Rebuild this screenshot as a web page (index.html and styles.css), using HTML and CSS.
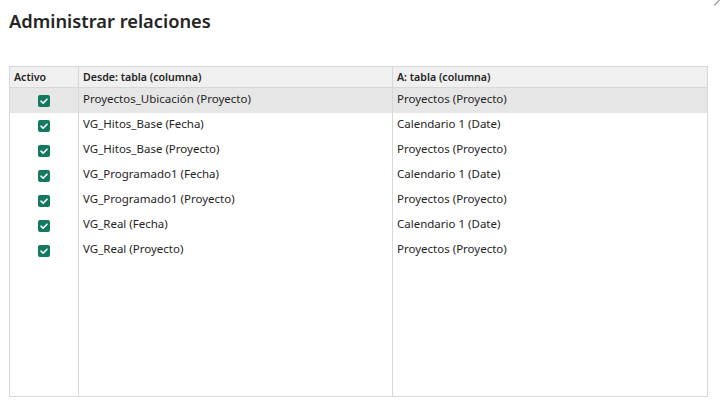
FILE: index.html
```html
<!DOCTYPE html>
<html lang="es">
<head>
<meta charset="utf-8">
<title>Administrar relaciones</title>
<link rel="stylesheet" href="styles.css">
</head>
<body>
<div class="dialog">
  <span class="close-hint"></span>
  <h1 class="title">Administrar relaciones</h1>
  <table class="rel-table">
    <colgroup>
      <col class="c-active">
      <col class="c-from">
      <col class="c-to">
    </colgroup>
    <thead>
      <tr>
        <th>Activo</th>
        <th>Desde: tabla (columna)</th>
        <th>A: tabla (columna)</th>
      </tr>
    </thead>
    <tbody>
      <tr class="selected">
        <td class="chk"><span class="box"><svg viewBox="0 0 12 12"><path d="M3 6.2 L5.1 8.2 L9 4.2"/></svg></span></td>
        <td>Proyectos_Ubicación (Proyecto)</td>
        <td>Proyectos (Proyecto)</td>
      </tr>
      <tr>
        <td class="chk"><span class="box"><svg viewBox="0 0 12 12"><path d="M3 6.2 L5.1 8.2 L9 4.2"/></svg></span></td>
        <td>VG_Hitos_Base (Fecha)</td>
        <td>Calendario 1 (Date)</td>
      </tr>
      <tr>
        <td class="chk"><span class="box"><svg viewBox="0 0 12 12"><path d="M3 6.2 L5.1 8.2 L9 4.2"/></svg></span></td>
        <td>VG_Hitos_Base (Proyecto)</td>
        <td>Proyectos (Proyecto)</td>
      </tr>
      <tr>
        <td class="chk"><span class="box"><svg viewBox="0 0 12 12"><path d="M3 6.2 L5.1 8.2 L9 4.2"/></svg></span></td>
        <td>VG_Programado1 (Fecha)</td>
        <td>Calendario 1 (Date)</td>
      </tr>
      <tr>
        <td class="chk"><span class="box"><svg viewBox="0 0 12 12"><path d="M3 6.2 L5.1 8.2 L9 4.2"/></svg></span></td>
        <td>VG_Programado1 (Proyecto)</td>
        <td>Proyectos (Proyecto)</td>
      </tr>
      <tr>
        <td class="chk"><span class="box"><svg viewBox="0 0 12 12"><path d="M3 6.2 L5.1 8.2 L9 4.2"/></svg></span></td>
        <td>VG_Real (Fecha)</td>
        <td>Calendario 1 (Date)</td>
      </tr>
      <tr>
        <td class="chk"><span class="box"><svg viewBox="0 0 12 12"><path d="M3 6.2 L5.1 8.2 L9 4.2"/></svg></span></td>
        <td>VG_Real (Proyecto)</td>
        <td>Proyectos (Proyecto)</td>
      </tr>
      <tr class="filler">
        <td></td><td></td><td></td>
      </tr>
    </tbody>
  </table>
</div>
</body>
</html>
```
FILE: styles.css
```css
html, body {
  margin: 0;
  padding: 0;
  background: #ffffff;
}

body {
  font-family: "Noto Sans", "Open Sans", sans-serif;
  color: #252423;
}

.dialog {
  position: relative;
  width: 722px;
  height: 416px;
  padding: 6px 0 0 9px;
  box-sizing: border-box;
}

.close-hint {
  position: absolute;
  right: 1px;
  top: 2px;
  width: 8px;
  height: 1px;
  background: #808080;
  transform: rotate(-45deg);
}

.title {
  margin: 0 0 30px 0;
  font-size: 18.3px;
  font-weight: 600;
  line-height: 30px;
  color: #252423;
}

.rel-table {
  border-collapse: collapse;
  width: 698px;
  height: 331px;
  table-layout: fixed;
  border: 1px solid #d8d8d8;
  font-size: 11.5px;
}

.c-active { width: 69px; }
.c-from { width: 314px; }
.c-to { width: 315px; }

.rel-table th,
.rel-table td {
  border-left: 1px solid #d8d8d8;
  border-right: 1px solid #d8d8d8;
  padding: 0 4px;
  text-align: left;
  white-space: nowrap;
  overflow: hidden;
}

.rel-table thead tr {
  height: 20px;
}

.rel-table thead th {
  height: 19px;
  padding: 0 4px 1px;
  line-height: 14px;
  background: #f0f0f0;
  font-weight: 600;
  font-size: 10.6px;
  border-bottom: 1px solid #d8d8d8;
  vertical-align: middle;
}

.rel-table tbody tr {
  height: 25px;
}

.rel-table tbody td {
  vertical-align: top;
  padding-top: 3px;
  line-height: 16px;
}

.rel-table tbody tr.selected {
  background: #e6e6e6;
}

.rel-table tbody tr.filler {
  height: auto;
}

.rel-table td.chk {
  text-align: center;
  padding: 7px 0 0 0;
}

.box {
  display: inline-block;
  width: 12px;
  height: 12px;
  border-radius: 2px;
  background: #137a60;
  vertical-align: top;
}

.box svg {
  display: block;
  width: 12px;
  height: 12px;
}

.box path {
  fill: none;
  stroke: #ffffff;
  stroke-width: 1.6;
  stroke-linecap: round;
  stroke-linejoin: round;
}
```
